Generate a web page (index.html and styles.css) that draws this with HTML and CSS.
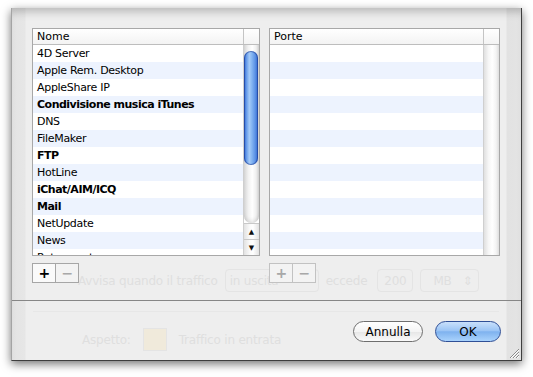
FILE: index.html
```html
<!DOCTYPE html>
<html lang="it">

<head>
    <meta charset="UTF-8">
    <title>Firewall</title>
    <link rel="stylesheet" href="styles.css">
</head>

<body>
    <div class="sheet">
        <!-- finestra dietro il foglio, visibile in trasparenza -->
        <div class="ghost">
            <div class="ghost-row">
                <span class="g-text g-avvisa">Avvisa quando il traffico</span>
                <span class="g-box g-popup">in uscita</span>
                <span class="g-text">eccede</span>
                <span class="g-box g-field">200</span>
                <span class="g-box g-unit">MB <i>&#8661;</i></span>
            </div>
            <div class="ghost-line"></div>
            <div class="ghost-row ghost-row2">
                <span class="g-text">Aspetto:</span>
                <span class="g-swatch"></span>
                <span class="g-text">Traffico in entrata</span>
            </div>
        </div>

        <div class="main">
            <div class="pane pane-left">
                <div class="table">
                    <div class="thead">
                        <div class="th">Nome</div>
                        <div class="corner"></div>
                    </div>
                    <div class="tbody">
                        <ul class="rows">
                            <li>4D Server</li>
                            <li>Apple Rem. Desktop</li>
                            <li>AppleShare IP</li>
                            <li class="b">Condivisione musica iTunes</li>
                            <li>DNS</li>
                            <li>FileMaker</li>
                            <li class="b">FTP</li>
                            <li>HotLine</li>
                            <li class="b">iChat/AIM/ICQ</li>
                            <li class="b">Mail</li>
                            <li>NetUpdate</li>
                            <li>News</li>
                            <li>Retrospect</li>
                        </ul>
                        <div class="scroller">
                            <div class="track">
                                <div class="thumb"></div>
                            </div>
                            <div class="arrow">&#9650;</div>
                            <div class="arrow">&#9660;</div>
                        </div>
                    </div>
                </div>
                <div class="seg">
                    <span class="seg-btn on">+</span>
                    <span class="seg-btn">&minus;</span>
                </div>
            </div>

            <div class="pane pane-right">
                <div class="table">
                    <div class="thead">
                        <div class="th">Porte</div>
                        <div class="corner"></div>
                    </div>
                    <div class="tbody">
                        <ul class="rows">
                            <li></li><li></li><li></li><li></li><li></li>
                            <li></li><li></li><li></li><li></li><li></li>
                            <li></li><li></li><li></li>
                        </ul>
                        <div class="scroller empty"></div>
                    </div>
                </div>
                <div class="seg off">
                    <span class="seg-btn">+</span>
                    <span class="seg-btn">&minus;</span>
                </div>
            </div>
        </div>

        <div class="footer">
            <button class="btn">Annulla</button>
            <button class="btn default">OK</button>
        </div>

        <svg class="grip" width="11" height="11" viewBox="0 0 11 11">
            <path d="M10 1 L1 10 M10 4 L4 10 M10 7 L7 10" stroke="#8a8a8a" stroke-width="1" />
            <path d="M10 2 L2 10 M10 5 L5 10 M10 8 L8 10" stroke="#fff" stroke-width="1" />
        </svg>
    </div>
</body>

</html>
```

FILE: styles.css
```css
* {
    margin: 0;
    padding: 0;
    box-sizing: border-box;
}

li {
    list-style: none;
}

body {
    width: 533px;
    height: 377px;
    background: #fff;
    font-family: "DejaVu Sans", "Liberation Sans", sans-serif;
    font-size: 11px;
    color: #000;
    overflow: hidden;
}

.sheet {
    position: relative;
    margin: 8px 0 0 11px;
    width: 511px;
    height: 353px;
    border-left: 1px solid #a4a4a4;
    border-right: 1px solid #3e3e3e;
    border-bottom: 1px solid #3e3e3e;
    background: linear-gradient(to right, #e4e4e4 0, #e6e6e6 13px, #eeeeee 14px, #eeeeee 494px, #e2e2e2 495px, #e4e4e4 100%);
    box-shadow: 0 3px 9px rgba(0, 0, 0, 0.55), inset 0 9px 9px -5px rgba(0, 0, 0, 0.22);
}

/* ghost window */
.ghost {
    position: absolute;
    left: 0;
    top: 0;
    right: 0;
    bottom: 0;
    padding: 261px 0 0 66px;
    color: #dfdfdf;
    font-size: 12px;
    letter-spacing: -0.2px;
}

.ghost-row {
    display: flex;
    align-items: center;
    gap: 7px;
    height: 23px;
}

.g-box {
    height: 23px;
    border: 1px solid #e4e4e4;
    border-radius: 4px;
    display: flex;
    align-items: center;
    padding-left: 4px;
}

.g-popup {
    width: 94px;
}

.g-field {
    width: 36px;
    justify-content: center;
    padding: 0;
    margin-left: 3px;
}

.g-unit {
    width: 59px;
    padding-left: 12px;
    justify-content: space-between;
    padding-right: 6px;
}

.g-unit i {
    font-style: normal;
}

.ghost-line {
    margin: 19px 22px 0 -45px;
    border-top: 1px solid #e7e7e7;
}

.ghost-row2 {
    margin: 16px 0 0 4px;
    gap: 12px;
}

.g-swatch {
    width: 24px;
    height: 23px;
    border: 1px solid #e4e4e4;
    background: #f0eadb;
}

/* content */
.main {
    position: relative;
    height: 292px;
    padding: 20px 0 0 20px;
    display: flex;
    gap: 9px;
}

.pane-left {
    width: 228px;
}

.pane-right {
    width: 231px;
}

.table {
    height: 228px;
    border: 1px solid #a8a8a8;
    background: #fff;
    display: flex;
    flex-direction: column;
}

.thead {
    height: 16px;
    display: flex;
    border-bottom: 1px solid #bdbdbd;
    background: linear-gradient(#ffffff, #f3f3f3);
}

.th {
    flex: 1;
    padding-left: 4px;
    line-height: 15px;
    border-right: 1px solid #c4c4c4;
}

.corner {
    width: 15px;
}

.tbody {
    flex: 1;
    display: flex;
    overflow: hidden;
}

.rows {
    flex: 1;
    overflow: hidden;
}

.rows li {
    height: 17px;
    line-height: 17px;
    padding-left: 4px;
    white-space: nowrap;
    letter-spacing: -0.3px;
}

.rows li:nth-child(even) {
    background: #edf3fe;
}

.rows li.b {
    font-weight: bold;
    letter-spacing: -0.5px;
}

.scroller {
    width: 16px;
    border-left: 1px solid #cfcfcf;
    display: flex;
    flex-direction: column;
}

.track {
    flex: 1;
    padding: 6px 1px 0 0;
    border-radius: 0 0 7px 7px;
    background: linear-gradient(to right, #d6d6d6, #f2f2f2 30%, #ffffff 55%, #f0f0f0 80%, #d2d2d2);
    box-shadow: inset 0 -4px 4px -2px rgba(0, 0, 0, 0.12);
}

.thumb {
    height: 114px;
    border-radius: 7px;
    background: linear-gradient(to right, #2b5fc6 0%, #5f95e8 15%, #a4caf7 38%, #86b6f2 55%, #5b92e6 80%, #2f63c8 100%);
    box-shadow: inset 0 0 0 1px rgba(25, 55, 140, 0.55);
}

.arrow {
    height: 16px;
    border-top: 1px solid #c8c8c8;
    font-size: 7px;
    color: #111;
    display: flex;
    align-items: center;
    justify-content: center;
    background: linear-gradient(to right, #e2e2e2, #fbfbfb 40%, #ffffff 60%, #e2e2e2);
}

.scroller.empty {
    background: linear-gradient(to right, #e0e0e0, #f6f6f6 30%, #ffffff 55%, #f4f4f4 80%, #dedede);
}

/* + / - */
.seg {
    display: flex;
    margin-top: 7px;
    width: 47px;
    height: 20px;
    border: 1px solid #a6a6a6;
}

.seg-btn {
    width: 23px;
    display: flex;
    align-items: center;
    justify-content: center;
    font-size: 14px;
    font-weight: bold;
    color: #a8a8a8;
    background: #f3f3f3;
}

.seg-btn + .seg-btn {
    border-left: 1px solid #a6a6a6;
}

.seg-btn.on {
    color: #000;
    background: #fafafa;
}

.seg.off,
.seg.off .seg-btn + .seg-btn {
    border-color: #c2c2c2;
}

/* footer */
.footer {
    position: relative;
    height: 60px;
    border-top: 1px solid #878787;
    display: flex;
    justify-content: flex-end;
    align-items: flex-start;
    gap: 12px;
    padding: 20px 20px 0 0;
}

.btn {
    height: 21px;
    border-radius: 11px;
    font-family: "DejaVu Sans", "Liberation Sans", sans-serif;
    font-size: 12px;
    color: #000;
    border: 1px solid #6e6e6e;
    background: linear-gradient(#ffffff, #f4f4f4 50%, #e6e6e6 51%, #fafafa);
    width: 70px;
}

.btn.default {
    width: 66px;
    border-color: #2f4f96;
    background: linear-gradient(#c9e0fb, #9cc5f5 45%, #7fb2ef 52%, #a9d2fc 100%);
}

.grip {
    position: absolute;
    right: 1px;
    bottom: 1px;
}
```
